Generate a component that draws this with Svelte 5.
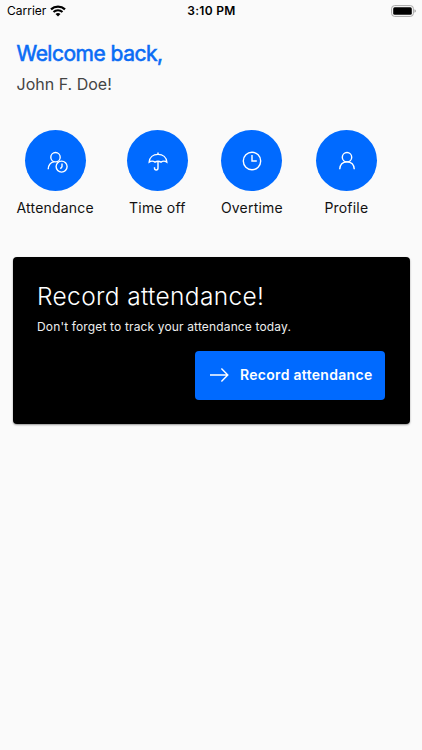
<script>
	let userName = 'John F. Doe';

	let actions = [
		{ id: 'attendance', label: 'Attendance' },
		{ id: 'timeoff', label: 'Time off' },
		{ id: 'overtime', label: 'Overtime' },
		{ id: 'profile', label: 'Profile' }
	];
</script>

<div class="screen">
	<div class="status-bar">
		<div class="carrier">
			<span>Carrier</span>
			<svg width="16" height="12" viewBox="0 0 16 12">
				<path d="M1 4.4a10.2 10.2 0 0 1 14 0" fill="none" stroke="#000" stroke-width="2.3" />
				<path d="M3.5 7.1a6.5 6.5 0 0 1 9 0" fill="none" stroke="#000" stroke-width="2.1" />
				<path d="M8 11.6 5.5 9.1a3.6 3.6 0 0 1 5 0z" fill="#000" />
			</svg>
		</div>
		<span class="time">3:10 PM</span>
		<svg class="battery" width="26" height="12" viewBox="0 0 26 12">
			<rect x="1.6" y="0.6" width="21.8" height="10.8" rx="3" fill="none" stroke="#a6a6a6" />
			<rect x="3.2" y="2.2" width="18.6" height="7.6" rx="1.5" fill="#000" />
			<path d="M24.6 4.2v3.6c1.4-.6 1.4-3 0-3.6z" fill="#777" />
		</svg>
	</div>

	<header>
		<h1>Welcome back,</h1>
		<p>{userName}!</p>
	</header>

	<nav class="actions">
		{#each actions as action}
			<div class="action">
				<button class="circle" aria-label={action.label}>
					<svg width="24" height="24" viewBox="0 0 24 24">
						{#if action.id == 'attendance'}
							<circle cx="11.5" cy="8.2" r="4.7" />
							<path d="M4.2 20.2c.2-3.9 2.5-6.9 6-7.6" />
							<circle cx="17.6" cy="17.6" r="5.5" />
							<path d="M18 14.4v3.4l-1.6 2" />
						{:else if action.id == 'timeoff'}
							<path d="M3.2 13.1c.3-4.8 3.9-7.7 8.8-7.7s8.5 2.9 8.8 7.7c-1.9-1.2-4-1.2-5.8 0-2-1.2-4-1.2-6 0-1.8-1.2-3.9-1.2-5.8 0z" />
							<path d="M12 3.5v1.9M12 12.6v6.3c0 2.7-3.5 2.7-3.5 0v-.7" />
						{:else if action.id == 'overtime'}
							<circle cx="12" cy="12" r="8.7" />
							<path d="M12 6v6h4.8" />
						{:else}
							<circle cx="12" cy="8.2" r="4.7" />
							<path d="M4.7 20.3c.3-4.9 3.2-7.4 7.3-7.4s7 2.5 7.3 7.4" />
						{/if}
					</svg>
				</button>
				<span class="label">{action.label}</span>
			</div>
		{/each}
	</nav>

	<section class="card">
		<h2>Record attendance!</h2>
		<p>Don't forget to track your attendance today.</p>
		<button class="record">
			<svg width="20" height="16" viewBox="0 0 20 16">
				<path d="M0 8h17.6M11.4 1.6 17.8 8l-6.4 6.4" />
			</svg>
			<span>Record attendance</span>
		</button>
	</section>
</div>

<style>
	:global(body) {
		margin: 0;
		background: #fafafa;
	}

	.screen {
		min-height: 750px;
		font-family: Inter, sans-serif;
		color: #111;
		background: #fafafa;
	}

	h1,
	h2,
	p {
		margin: 0;
		white-space: nowrap;
	}

	button {
		border: none;
		padding: 0;
		font: inherit;
		cursor: pointer;
	}

	.status-bar {
		display: grid;
		grid-template-columns: 1fr auto 1fr;
		align-items: center;
		height: 21px;
		padding: 0 6px 0 7px;
		font-size: 12px;
		color: #000;
	}

	.carrier {
		display: flex;
		align-items: center;
		gap: 4px;
	}

	.time {
		font-weight: 600;
		letter-spacing: 0.3px;
	}

	.battery {
		justify-self: end;
	}

	header {
		padding: 19px 16.5px 0;
	}

	/* regular weight thickened with a stroke, so the letters stay narrow */
	h1 {
		font-size: 21px;
		line-height: 28px;
		font-weight: 400;
		letter-spacing: -0.5px;
		-webkit-text-stroke: 0.6px #0a6cf5;
		color: #0a6cf5;
	}

	header p {
		margin-top: 4px;
		font-size: 16px;
		line-height: 24px;
		color: #444;
	}

	.actions {
		display: flex;
		gap: 33px;
		padding: 33.5px 16.5px 0;
	}

	.action {
		display: flex;
		flex-direction: column;
		align-items: center;
	}

	.circle {
		display: flex;
		align-items: center;
		justify-content: center;
		width: 61px;
		height: 61px;
		padding: 1px 0 0 1px;
		box-sizing: border-box;
		border-radius: 50%;
		background: #006aff;
	}

	.circle svg,
	.record svg {
		fill: none;
		stroke: #fff;
		stroke-width: 1.4;
	}

	.label {
		margin-top: 7.5px;
		font-size: 14px;
		line-height: 20px;
		letter-spacing: 0.2px;
	}

	.card {
		display: flex;
		flex-direction: column;
		height: 167px;
		margin: 39px 12.5px 0;
		padding: 23px 24.5px 0;
		box-sizing: border-box;
		border-radius: 4px;
		background: #000;
		box-shadow: 0 1px 2px rgba(0, 0, 0, 0.4);
		color: #fff;
	}

	h2 {
		font-size: 24.5px;
		line-height: 32px;
		font-weight: 300;
		letter-spacing: 0.35px;
	}

	.card p {
		margin-top: 6px;
		font-size: 12px;
		line-height: 18px;
		letter-spacing: 0.15px;
		color: #eee;
	}

	.record {
		display: flex;
		align-items: center;
		align-self: flex-end;
		gap: 10px;
		width: 190px;
		height: 49px;
		margin-top: 14.5px;
		padding-left: 15px;
		box-sizing: border-box;
		border-radius: 4px;
		background: #006aff;
		color: #fff;
		font-size: 14px;
		font-weight: 600;
		letter-spacing: 0.3px;
		white-space: nowrap;
	}

	.record span {
		margin-bottom: 1px;
	}
</style>
